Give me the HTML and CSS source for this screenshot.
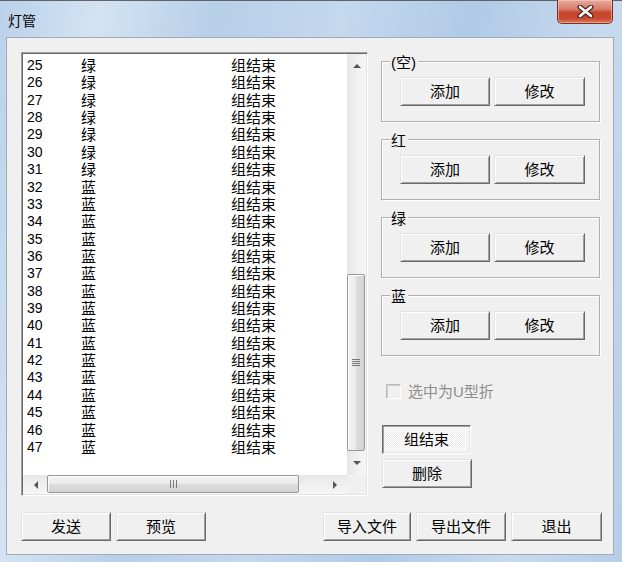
FILE: index.html
```html
<!DOCTYPE html>
<html lang="zh-CN">
<head>
    <meta charset="UTF-8">
    <title>灯管</title>
    <link rel="stylesheet" href="styles.css">
</head>
<body>

<div class="window">
    <div class="titlebar">
        <span class="title">灯管</span>
        <button class="close-btn" type="button">
            <svg width="17" height="13" viewBox="0 0 17 13">
                <path d="M3 2 L14 11 M14 2 L3 11" stroke="#4a2520" stroke-width="5" stroke-linecap="round"/>
                <path d="M3 2 L14 11 M14 2 L3 11" stroke="#ffffff" stroke-width="2.6" stroke-linecap="round"/>
            </svg>
        </button>
    </div>

    <div class="client">
        <div class="main">
            <!-- daftar lampu -->
            <div class="listbox">
                <div class="list-body">
                    <div class="rows" id="rows"></div>
                    <div class="vscroll">
                        <div class="arrow arrow-v">
                            <svg width="8" height="5" viewBox="0 0 8 5"><polygon points="0,5 4,1 8,5" fill="#555"/></svg>
                        </div>
                        <div class="track-v">
                            <div class="thumb-v">
                                <svg width="8" height="9" viewBox="0 0 8 9">
                                    <path d="M0 1.5 H8 M0 3.5 H8 M0 5.5 H8 M0 7.5 H8" stroke="#7a7a7a" stroke-width="1"/>
                                </svg>
                            </div>
                        </div>
                        <div class="arrow arrow-v arrow-down">
                            <svg width="8" height="5" viewBox="0 0 8 5"><polygon points="0,0 8,0 4,4" fill="#555"/></svg>
                        </div>
                    </div>
                </div>
                <div class="hscroll">
                    <div class="arrow arrow-h">
                        <svg width="5" height="8" viewBox="0 0 5 8"><polygon points="5,0 5,8 1,4" fill="#555"/></svg>
                    </div>
                    <div class="track-h">
                        <div class="thumb-h">
                            <svg width="9" height="8" viewBox="0 0 9 8">
                                <path d="M1.5 0 V8 M4.5 0 V8 M7.5 0 V8" stroke="#7a7a7a" stroke-width="1"/>
                            </svg>
                        </div>
                    </div>
                    <div class="arrow arrow-h arrow-right">
                        <svg width="5" height="8" viewBox="0 0 5 8"><polygon points="0,0 4,4 0,8" fill="#555"/></svg>
                    </div>
                    <div class="corner"></div>
                </div>
            </div>

            <div class="side">
                <div class="group">
                    <span class="group-label">(空)</span>
                    <button class="btn btn-sm" type="button">添加</button>
                    <button class="btn btn-sm" type="button">修改</button>
                </div>
                <div class="group">
                    <span class="group-label">红</span>
                    <button class="btn btn-sm" type="button">添加</button>
                    <button class="btn btn-sm" type="button">修改</button>
                </div>
                <div class="group">
                    <span class="group-label">绿</span>
                    <button class="btn btn-sm" type="button">添加</button>
                    <button class="btn btn-sm" type="button">修改</button>
                </div>
                <div class="group">
                    <span class="group-label">蓝</span>
                    <button class="btn btn-sm" type="button">添加</button>
                    <button class="btn btn-sm" type="button">修改</button>
                </div>

                <label class="check disabled">
                    <span class="check-box"></span>
                    <span>选中为U型折</span>
                </label>

                <button class="btn btn-side btn-pressed" type="button">组结束</button>
                <button class="btn btn-side" type="button">删除</button>
            </div>
        </div>

        <div class="footer">
            <div class="btn-row">
                <button class="btn" type="button">发送</button>
                <button class="btn" type="button">预览</button>
            </div>
            <div class="btn-row btn-row-right">
                <button class="btn btn-import" type="button">导入文件</button>
                <button class="btn" type="button">导出文件</button>
                <button class="btn btn-exit" type="button">退出</button>
            </div>
        </div>
    </div>
</div>

<script>
    var rows = document.getElementById("rows");
    for (var i = 25; i <= 47; i++) {
        var warna = i <= 31 ? "绿" : "蓝";
        var row = document.createElement("div");
        row.className = "row";
        row.innerHTML = '<span class="col-num">' + i + '</span>' +
                        '<span class="col-color">' + warna + '</span>' +
                        '<span class="col-end">组结束</span>';
        rows.appendChild(row);
    }
</script>

</body>
</html>
```

FILE: styles.css
```css
/* Reset dasar */
* {
    margin: 0;
    padding: 0;
    box-sizing: border-box;
}

body {
    width: 622px;
    height: 562px;
    overflow: hidden;
    font-family: "Liberation Sans", "Noto Sans CJK SC", sans-serif;
    font-size: 15px;
    color: #000;
}

/* Bingkai jendela */
.window {
    width: 622px;
    height: 562px;
    display: flex;
    flex-direction: column;
    border-top: 1px solid #5d646c;
    background: linear-gradient(100deg, #bad1ea 0%, #d3e3f3 14%, #b8cfe8 30%, #c4d8ee 48%, #b0cae6 66%, #c7daef 84%, #b6cee8 100%);
}

.titlebar {
    height: 36px;
    display: flex;
    justify-content: space-between;
    align-items: flex-start;
    padding-left: 8px;
    padding-right: 9px;
}

.title {
    margin-top: 12px;
    font-size: 14px;
    line-height: 17px;
}

.close-btn {
    width: 56px;
    height: 24px;
    margin-top: -1px;
    display: flex;
    align-items: center;
    justify-content: center;
    border: 1px solid #7b2f25;
    border-top: none;
    border-radius: 0 0 5px 5px;
    background: linear-gradient(to bottom, #e8aa9e 0%, #d77b69 40%, #c6452c 55%, #c9492e 80%, #dc7a5b 100%);
    box-shadow: inset 0 0 0 1px rgba(255, 220, 210, 0.45);
}

/* Area isi */
.client {
    flex: 1;
    margin: 0 8px 7px 6px;
    background: #f0f0f0;
    border: 1px solid #a3aab2;
    padding: 14px 11px 0 14px;
}

.main {
    display: flex;
    gap: 13px;
}

/* Listbox */
.listbox {
    width: 347px;
    height: 444px;
    display: flex;
    flex-direction: column;
    background: #fff;
    border: 1px solid;
    border-color: #a0a0a0 #fff #fff #a0a0a0;
    box-shadow: inset 1px 1px #696969, inset -1px -1px #e3e3e3;
    padding: 1px;
}

.list-body {
    flex: 1;
    display: flex;
    min-height: 0;
}

.rows {
    flex: 1;
    padding: 3px 0 0 4px;
    overflow: hidden;
}

.row {
    display: flex;
    height: 17.36px;
    line-height: 17.36px;
    white-space: nowrap;
}

.col-num {
    width: 54px;
    font-size: 14px;
}

.col-color {
    width: 150px;
}

/* Scrollbar */
.vscroll {
    width: 19px;
    display: flex;
    flex-direction: column;
    background: linear-gradient(to right, #e6e6e6, #f1f1f1 60%, #f5f5f5);
}

.arrow {
    display: flex;
    align-items: center;
    justify-content: center;
}

.arrow-v {
    height: 22px;
}

.arrow-down {
    height: 24px;
}

.track-v {
    flex: 1;
    display: flex;
    flex-direction: column;
    justify-content: flex-end;
}

.thumb-v {
    height: 177px;
    margin: 0 1px 0 0;
    display: flex;
    align-items: center;
    justify-content: center;
    border: 1px solid #979797;
    border-radius: 2px;
    background: linear-gradient(to right, #f3f3f3 0%, #ececec 45%, #dcdcdc 55%, #d2d2d2 100%);
    box-shadow: inset 1px 1px #fff;
}

.hscroll {
    height: 19px;
    display: flex;
    background: linear-gradient(to bottom, #e6e6e6, #f1f1f1 60%, #f5f5f5);
}

.arrow-h {
    width: 24px;
}

.arrow-right {
    width: 24px;
}

.track-h {
    flex: 1;
    display: flex;
}

.thumb-h {
    width: 252px;
    margin-bottom: 1px;
    display: flex;
    align-items: center;
    justify-content: center;
    border: 1px solid #979797;
    border-radius: 2px;
    background: linear-gradient(to bottom, #f3f3f3 0%, #ececec 45%, #dcdcdc 55%, #d2d2d2 100%);
    box-shadow: inset 1px 1px #fff;
}

.corner {
    width: 19px;
    background: #f0f0f0;
}

/* Panel kanan */
.side {
    width: 219px;
    padding-top: 9px;
    display: flex;
    flex-direction: column;
    align-items: flex-start;
}

.group {
    position: relative;
    width: 219px;
    height: 61px;
    display: flex;
    gap: 4px;
    padding: 15px 0 0 18px;
    border: 1px solid #b0b0b0;
    box-shadow: inset 1px 1px #fff, 1px 1px #fff;
}

.group + .group {
    margin-top: 17px;
}

.group-label {
    position: absolute;
    top: -8px;
    left: 8px;
    padding: 0 2px 0 1px;
    background: #f0f0f0;
    line-height: 17px;
}

/* Tombol */
.btn {
    width: 90px;
    height: 29px;
    font-family: "Liberation Sans", "Noto Sans CJK SC", sans-serif;
    font-size: 15px;
    line-height: 1;
    color: #000;
    background: #f0f0f0;
    border: 1px solid;
    border-color: #e3e3e3 #696969 #696969 #e3e3e3;
    box-shadow: inset 1px 1px #fff, inset -1px -1px #a0a0a0;
}

.btn-sm + .btn-sm {
    width: 91px;
}

.btn-side {
    margin-left: 1px;
}

.btn-pressed {
    width: 89px;
    margin-top: 25px;
    margin-bottom: 5px;
    border-color: #696969 #fff #fff #696969;
    box-shadow: inset 1px 1px #a0a0a0, inset -1px -1px #e3e3e3;
    background-color: #f7f7f7;
    background-image: repeating-conic-gradient(#ffffff 0% 25%, #ededed 0% 50%);
    background-size: 2px 2px;
}

/* Checkbox nonaktif */
.check {
    display: flex;
    align-items: center;
    gap: 7px;
    margin: 27px 0 0 5px;
    line-height: 17px;
}

.check.disabled {
    color: #8d8d8d;
}

.check-box {
    width: 15px;
    height: 15px;
    border: 1px solid;
    border-color: #b9b9b9 #fff #fff #b9b9b9;
    box-shadow: inset 1px 1px #d0d0d0;
    background: #f0f0f0;
}

/* Baris bawah */
.footer {
    display: flex;
    justify-content: space-between;
    margin-top: 16px;
}

.btn-row {
    display: flex;
    gap: 5px;
}

.btn-row-right {
    gap: 5px;
}

.btn-import {
    width: 88px;
}

.btn-exit {
    width: 91px;
}
```
